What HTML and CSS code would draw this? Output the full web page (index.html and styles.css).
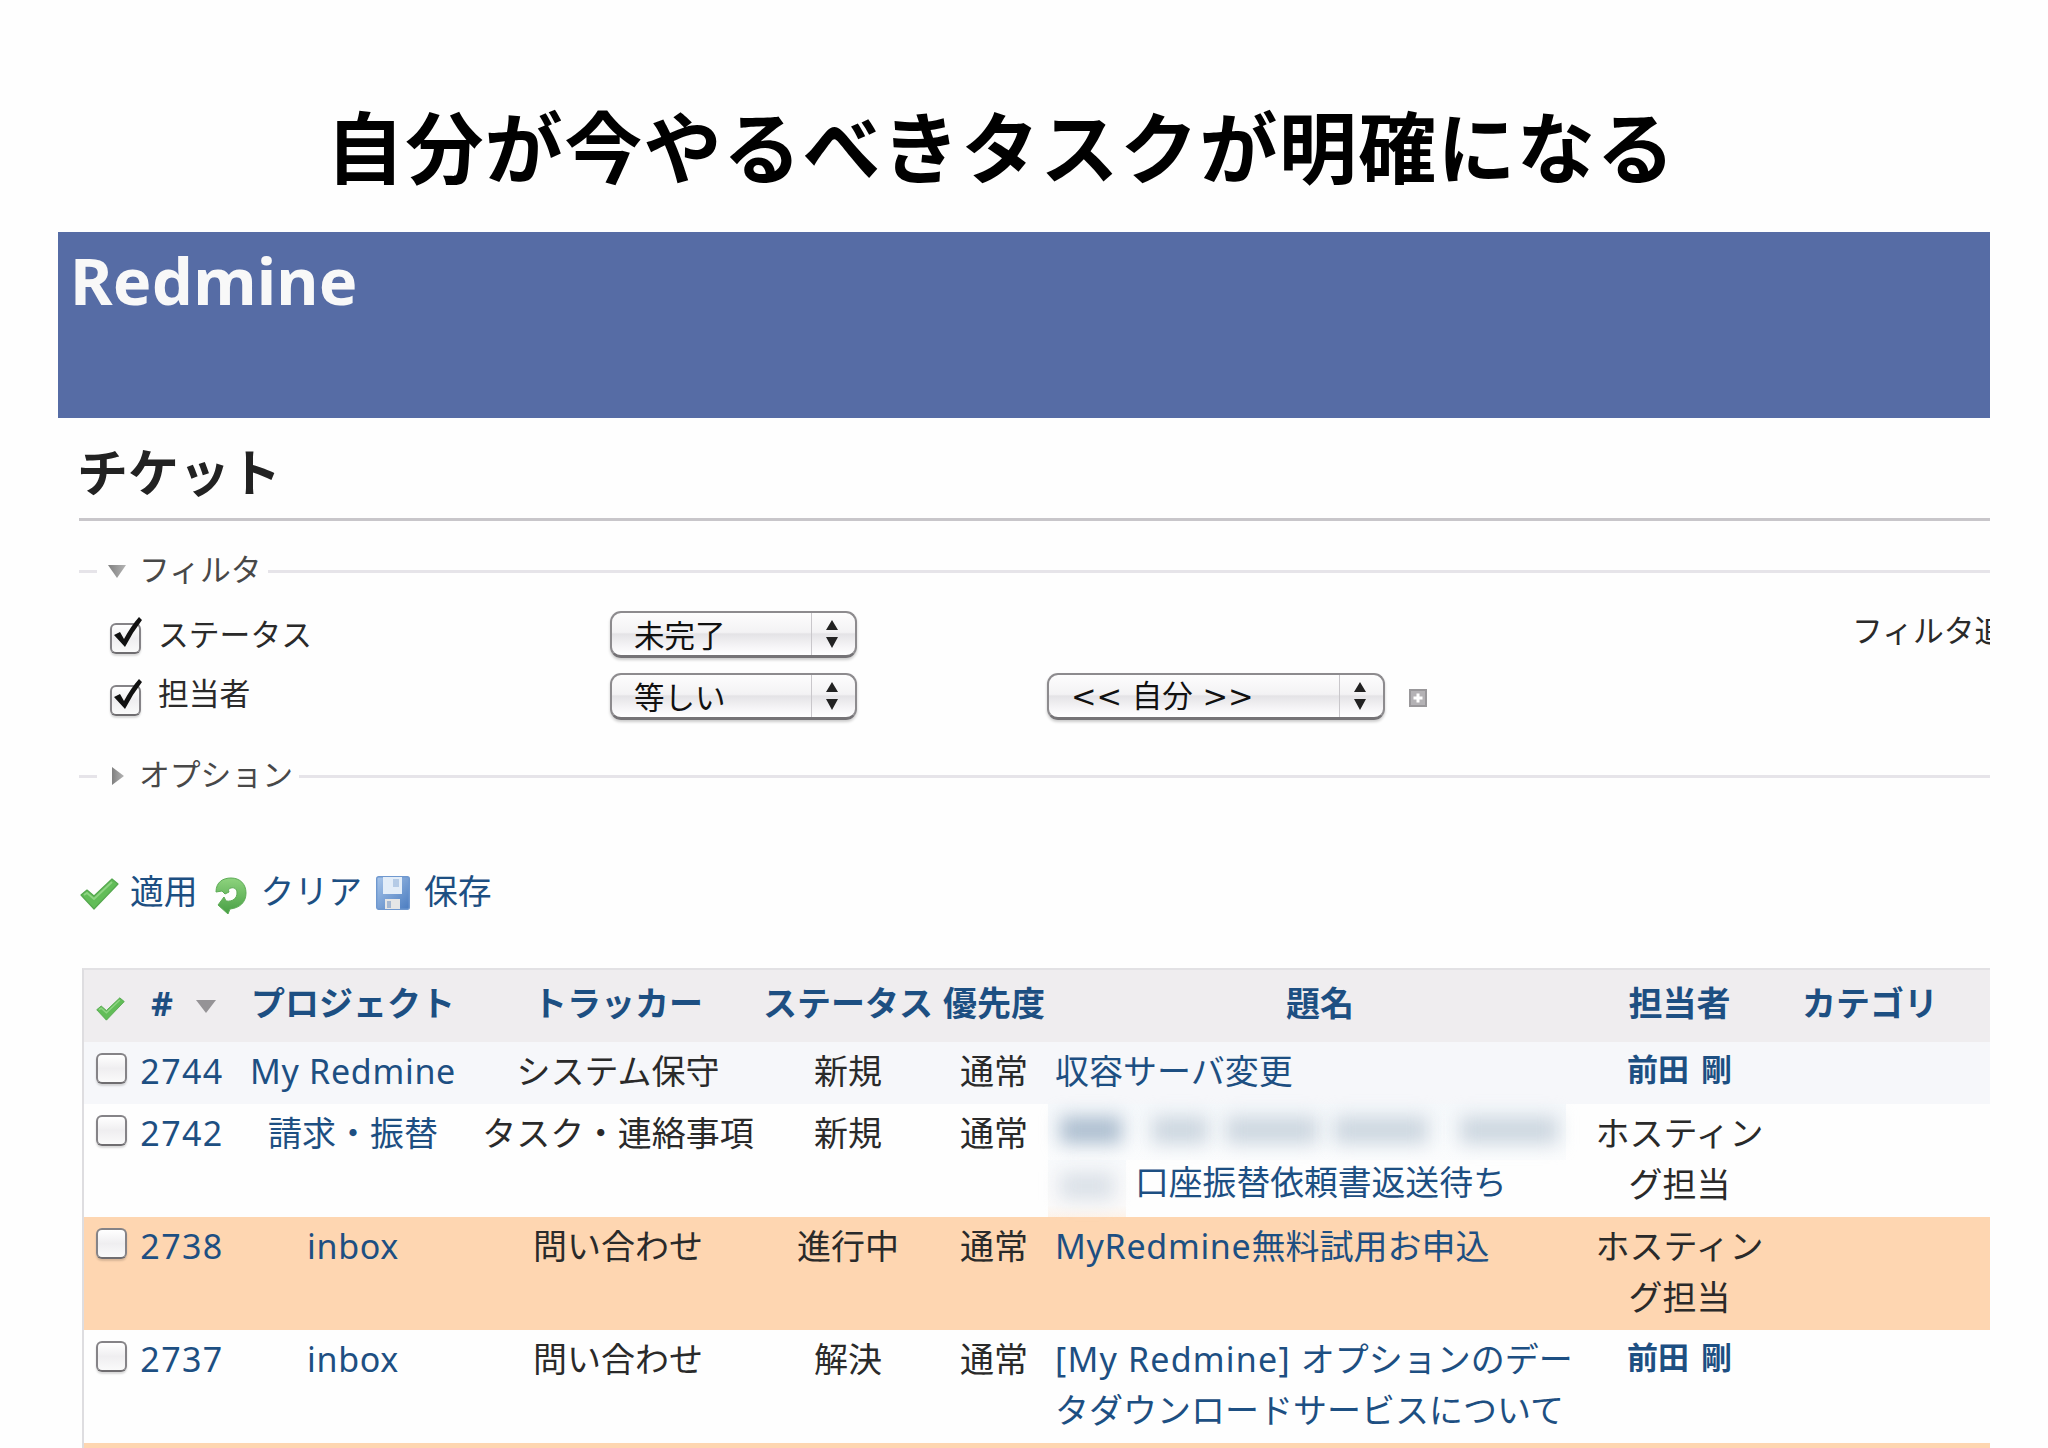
FILE: index.html
```html
<!DOCTYPE html>
<html lang="ja">

<head>
  <meta charset="utf-8">
  <title>Redmine</title>
  <link rel="stylesheet" href="styles.css">
</head>

<body>
  <svg width="0" height="0" class="defs">
    <defs>
      <linearGradient id="green" x1="0" y1="0" x2="0" y2="1">
        <stop offset="0" stop-color="#8ed37e" />
        <stop offset="1" stop-color="#479f44" />
      </linearGradient>
      <linearGradient id="blue" x1="0" y1="0" x2="1" y2="1">
        <stop offset="0" stop-color="#a9c6ea" />
        <stop offset="1" stop-color="#4a7cc0" />
      </linearGradient>
      <linearGradient id="gray" x1="0" y1="0" x2="1" y2="0">
        <stop offset="0" stop-color="#808080" />
        <stop offset="1" stop-color="#b4b4b4" />
      </linearGradient>
      <symbol id="check" viewBox="0 0 39 32">
        <path d="M1 17 L7 12 L14 18 L32 1 L38 6 L14 31 Z" fill="#62bd58" stroke="#55a84e" stroke-width="1.2" stroke-linejoin="round" />
        <path d="M4 17 L7 15 L14 21 L32 4" fill="none" stroke="#8ed482" stroke-width="2" />
      </symbol>
      <symbol id="updown" viewBox="0 0 12 28">
        <path d="M6 0 L12 10 H0 Z M0 17 H12 L6 28 Z" fill="#222" />
      </symbol>
      <symbol id="tick" viewBox="0 0 34 38">
        <path d="M5 18 L11 15 L15 22 Q22 9 30 0 L33 3 Q23 16 16 30 Z" fill="#111" />
      </symbol>
    </defs>
  </svg>

  <h1 class="slide-title">自分が今やるべきタスクが明確になる</h1>
  <div class="screen">
    <div class="header">Redmine</div>
    <div class="content">
      <h2>チケット</h2>

      <fieldset>
        <legend>
          <svg class="arrow" viewBox="0 0 20 20"><path d="M1 4 H19 L10 17 Z" fill="url(#gray)" /></svg><span>フィルタ</span>
        </legend>
        <div class="filters">
          <div class="filter-table">
            <div class="filter">
              <label><span class="box checked"><svg><use href="#tick" /></svg></span>ステータス</label>
              <span class="select">未完了<i><svg><use href="#updown" /></svg></i></span>
            </div>
            <div class="filter second">
              <label><span class="box checked"><svg><use href="#tick" /></svg></span>担当者</label>
              <span class="select">等しい<i><svg><use href="#updown" /></svg></i></span>
              <span class="select wide">&lt;&lt; 自分 &gt;&gt;<i><svg><use href="#updown" /></svg></i></span>
              <svg class="plus" viewBox="0 0 18 18">
                <rect x="1" y="1" width="16" height="16" fill="#b4b2b5" stroke="#99979a" stroke-width="2" />
                <path d="M9 4.5 V13.5 M4.5 9 H13.5" stroke="#fff" stroke-width="3" />
              </svg>
            </div>
          </div>
          <div class="add-filter">フィルタ追加</div>
        </div>
      </fieldset>

      <fieldset class="options">
        <legend>
          <svg class="arrow" viewBox="0 0 20 20"><path d="M5 1 L17 10 L5 19 Z" fill="url(#gray)" /></svg><span>オプション</span>
        </legend>
      </fieldset>

      <p class="buttons">
        <a><svg class="icon-check"><use href="#check" /></svg>適用</a>
        <a>
          <svg class="icon-reload" viewBox="0 0 32 37">
            <path d="M1 15 C1 5 8 1 16 1 C25 1 31 7 31 16 C31 25 25 31 15 32 L13 37 L3 28 L9 20 L11 24 C18 25 22 21 22 16 C22 12 19 10 16 11 C14 11 13 13 14 15 L10 17 L7 14 Z" fill="url(#green)" stroke="#5cab55" stroke-width="1" />
          </svg>クリア</a>
        <a>
          <svg class="icon-save" viewBox="0 0 34 34">
            <rect x="0.7" y="0.7" width="32.6" height="32.6" rx="2" fill="url(#blue)" stroke="#6f98cf" stroke-width="1.4" />
            <rect x="7" y="1" width="19" height="17" fill="#e3edf8" />
            <rect x="17" y="3" width="6" height="8" fill="#b5cbe6" />
            <rect x="9" y="23" width="15" height="10" fill="#e6e6e6" />
            <rect x="11" y="25" width="4" height="7" fill="#a5b8d2" />
          </svg>保存</a>
      </p>

      <table>
        <colgroup>
          <col class="c-check"><col class="c-id"><col class="c-project"><col class="c-tracker"><col class="c-status">
          <col class="c-priority"><col class="c-subject"><col class="c-assigned"><col class="c-category"><col>
        </colgroup>
        <tr class="head">
          <th><svg class="icon-small"><use href="#check" /></svg></th>
          <th class="sort">#<svg viewBox="0 0 22 14"><path d="M1 1 H21 L11 14 Z" fill="#959396" /></svg></th>
          <th>プロジェクト</th>
          <th>トラッカー</th>
          <th>ステータス</th>
          <th>優先度</th>
          <th>題名</th>
          <th>担当者</th>
          <th>カテゴリ</th>
          <th></th>
        </tr>
        <tr class="odd">
          <td><span class="box"></span></td>
          <td><a class="number">2744</a></td>
          <td><a class="latin">My Redmine</a></td>
          <td>システム保守</td>
          <td>新規</td>
          <td>通常</td>
          <td class="subject"><a>収容サーバ変更</a></td>
          <td><a class="user">前田 剛</a></td>
          <td></td>
          <td></td>
        </tr>
        <tr>
          <td><span class="box"></span></td>
          <td><a class="number">2742</a></td>
          <td><a>請求・振替</a></td>
          <td>タスク・連絡事項</td>
          <td>新規</td>
          <td>通常</td>
          <td class="subject masked">
            <div class="mask"><b class="m1"></b><b class="m2"></b><b class="m3"></b><b class="m4"></b><b class="m5"></b></div>
            <div class="line"><div class="mask short"><b class="m6"></b></div><a>口座振替依頼書返送待ち</a></div>
          </td>
          <td>ホスティング担当</td>
          <td></td>
          <td></td>
        </tr>
        <tr class="high">
          <td><span class="box"></span></td>
          <td><a class="number">2738</a></td>
          <td><a class="latin">inbox</a></td>
          <td>問い合わせ</td>
          <td>進行中</td>
          <td>通常</td>
          <td class="subject"><a><span class="latin">MyRedmine</span>無料試用お申込</a></td>
          <td>ホスティング担当</td>
          <td></td>
          <td></td>
        </tr>
        <tr>
          <td><span class="box"></span></td>
          <td><a class="number">2737</a></td>
          <td><a class="latin">inbox</a></td>
          <td>問い合わせ</td>
          <td>解決</td>
          <td>通常</td>
          <td class="subject"><a><span class="prefix">[My Redmine] </span>オプションのデータダウンロードサービスについて</a></td>
          <td><a class="user">前田 剛</a></td>
          <td></td>
          <td></td>
        </tr>
        <tr class="high">
          <td colspan="10"></td>
        </tr>
      </table>
    </div>
  </div>
</body>

</html>
```
FILE: styles.css
```css
* {
  box-sizing: border-box;
}

body {
  margin: 0;
  height: 1448px;
  overflow: hidden;
  background: #fefefe;
  color: #2a2a2a;
  font-family: "Noto Sans", "Noto Sans CJK JP", sans-serif;
  font-size: 34px;
}

svg {
  display: block;
  flex: none;
}

.defs {
  position: absolute;
}

.slide-title {
  margin: 0;
  height: 232px;
  padding: 86px 0 0 326px;
  font-family: "Noto Sans CJK JP", sans-serif;
  font-size: 78px;
  letter-spacing: 1.4px;
  line-height: 116px;
  font-weight: bold;
  color: #000;
  white-space: nowrap;
}

.screen {
  width: 1932px;
  height: 1216px;
  margin-left: 58px;
  overflow: hidden;
}

.header {
  height: 186px;
  padding: 8px 0 0 12px;
  background: #566ca5;
  color: #f8f8f8;
  font-size: 65px;
  letter-spacing: 0.2px;
  line-height: 80px;
  font-weight: bold;
}

.content {
  padding-left: 21px;
}

h2 {
  margin: 0;
  height: 103px;
  padding-top: 14px;
  border-bottom: 3px solid #c8c6ca;
  font-size: 51px;
  text-indent: -2px;
  line-height: 80px;
  color: #222;
}

/* filters */
fieldset {
  height: 205px;
  margin: 30px 0 0;
  padding: 0 0 0 18px;
  border: 0 solid #e6e4e9;
  border-top-width: 3px;
  min-width: 0;
  font-size: 30.8px;
}

fieldset.options {
  height: 60px;
  margin-top: 0;
}

legend {
  display: flex;
  align-items: center;
  height: 40px;
  padding: 0 6px 0 10px;
  line-height: 36px;
  color: #484848;
}

legend span {
  height: 40px;
}

.arrow {
  width: 20px;
  height: 20px;
  margin-right: 12px;
}

.filters {
  display: flex;
  padding: 20px 0 0 13px;
}

.filter-table {
  flex: none;
  width: 1742px;
}

.filter {
  display: flex;
  height: 62px;
}

.filter label {
  display: flex;
  width: 500px;
  height: 46px;
  line-height: 46px;
}

.filter.second label {
  line-height: 41px;
}

.box {
  display: block;
  width: 31px;
  height: 31px;
  border: 2.5px solid #858387;
  border-bottom-color: #6f6d70;
  border-radius: 6px;
  background: linear-gradient(#fff, #efeef0 50%, #fafafa);
  box-shadow: 0 2px 2px rgba(0, 0, 0, 0.15);
}

.box.checked {
  margin: 12px 17px 0 0;
}

.box.checked svg {
  width: 34px;
  height: 38px;
  margin: -8px 0 0 -3px;
}

.select {
  display: flex;
  width: 247px;
  height: 47px;
  padding-left: 22px;
  border: 2px solid #8d8b8e;
  border-bottom: 3px solid #757376;
  border-radius: 11px;
  background: linear-gradient(#fdfdfd, #f3f2f4 46%, #e4e3e6 50%, #f6f5f7 80%, #fff);
  box-shadow: 0 2px 3px rgba(0, 0, 0, 0.2);
  color: #111;
  font-size: 30.5px;
  line-height: 44px;
}

.select i {
  width: 44px;
  margin-left: auto;
  padding: 7px 0 0 14px;
  border-left: 1px solid #c9c7cb;
}

.select i svg {
  width: 12px;
  height: 28px;
}

.select.wide {
  width: 338px;
  margin-left: 190px;
  font-family: "DejaVu Sans", "Noto Sans CJK JP", sans-serif;
}

.plus {
  width: 18px;
  height: 18px;
  margin: 16px 0 0 24px;
}

.add-filter {
  white-space: nowrap;
  line-height: 38px;
}

/* toolbar */
.buttons {
  display: flex;
  margin: 0;
  height: 152px;
  padding-top: 50px;
  font-size: 33.8px;
  line-height: 50px;
}

a {
  color: #1d4f82;
}

.buttons a {
  display: flex;
}

.icon-check {
  width: 39px;
  height: 32px;
  margin: 12px 11px 0 1px;
}

.icon-reload {
  width: 32px;
  height: 37px;
  margin: 11px 14px 0 17px;
}

.icon-save {
  width: 34px;
  height: 34px;
  margin: 10px 14px 0 14px;
}

/* ticket list */
table {
  width: 2000px;
  margin-left: 3px;
  table-layout: fixed;
  border-collapse: separate;
  border-spacing: 0;
  border-left: 2px solid #dedde0;
  border-top: 2px solid #e2e1e4;
}

.c-check {
  width: 54px;
}

.c-id {
  width: 88px;
}

.c-project {
  width: 254px;
}

.c-tracker {
  width: 276px;
}

.c-status {
  width: 184px;
}

.c-priority {
  width: 108px;
}

.c-subject {
  width: 544px;
}

.c-assigned {
  width: 175px;
}

.c-category {
  width: 206px;
}

th {
  height: 72px;
  padding: 0;
  background: #efedef;
  color: #1d4f82;
  line-height: 67px;
  vertical-align: top;
  white-space: nowrap;
}

.icon-small {
  width: 29px;
  height: 24px;
  margin: 27px 0 0 12px;
}

.sort {
  padding-left: 4px;
}

.sort svg {
  display: inline-block;
  width: 22px;
  height: 14px;
  margin-left: 22px;
  vertical-align: 3px;
}

td {
  height: 62px;
  padding: 4px 0 7px;
  line-height: 51px;
  text-align: center;
  vertical-align: top;
}

td .box {
  margin: 7px 0 0 12px;
}

.odd td {
  background: #f6f7fa;
}

.high td {
  background: #fed6b1;
}

.number {
  letter-spacing: 1.4px;
}

.latin {
  letter-spacing: 0.7px;
}

.prefix {
  letter-spacing: 1.2px;
}

.user {
  display: block;
  margin-top: -2px;
  font-size: 31px;
  font-weight: bold;
  word-spacing: 4px;
}

td.subject {
  padding-left: 7px;
  padding-right: 16px;
  text-align: left;
}

td.masked {
  padding: 0;
}

.mask {
  display: flex;
  width: 518px;
  height: 56px;
  padding: 12px 0 0 12px;
  background: linear-gradient(#f5f8fb, #fbfcfd);
}

.mask b {
  height: 28px;
  background: #cdd7e0;
  filter: blur(9px);
}

.mask .m1 {
  width: 62px;
  background: #aebfd0;
}

.mask .m2 {
  width: 56px;
  margin-left: 30px;
}

.mask .m3 {
  width: 92px;
  margin-left: 18px;
}

.mask .m4 {
  width: 94px;
  margin-left: 16px;
}

.mask .m5 {
  width: 98px;
  margin-left: 32px;
}

.mask .m6 {
  width: 54px;
  background: #dbe1e8;
}

.line {
  display: flex;
  font-size: 33.8px;
  line-height: 45px;
}

.mask.short {
  width: 78px;
  height: 57px;
  margin-right: 9px;
  background: linear-gradient(#f8fafc, #fbfafa 80%, #fdf3ea);
}
```
